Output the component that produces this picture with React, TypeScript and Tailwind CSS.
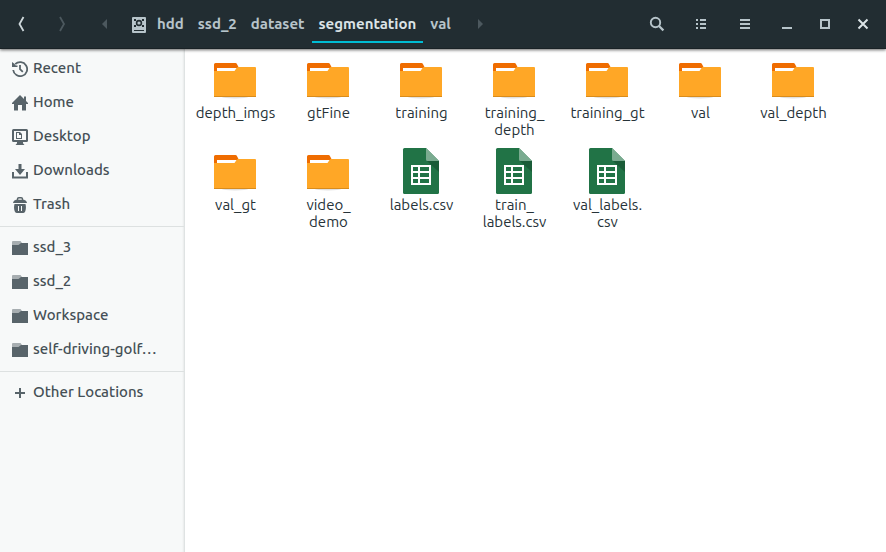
import type { ReactNode } from "react";

function Glyph({ children, className = "" }: { children: ReactNode; className?: string }) {
  return (
    <svg className={`size-4 shrink-0 ${className}`} viewBox="0 0 16 16" fill="currentColor" aria-hidden="true">
      {children}
    </svg>
  );
}

function RecentIcon() {
  return (
    <Glyph>
      <path d="M3.200 3.200A7 7 0 1 1 1.200 9" fill="none" stroke="currentColor" strokeWidth="1.800" />
      <path d="M0 1v5h5.500V4.500H3.800L2 2.500z" />
      <path d="M8 4v4.200l2.800 2.600" fill="none" stroke="currentColor" strokeWidth="1.800" />
    </Glyph>
  );
}

function HomeIcon() {
  return (
    <Glyph>
      <path d="M8 0 0 8v1h2v6.500h4V10h4v5.500h4V9h2V8l-2-2V1.500h-2V4z" />
    </Glyph>
  );
}

function DesktopIcon() {
  return (
    <Glyph>
      <path fillRule="evenodd" d="M1.500 0h13A1.500 1.500 0 0 1 16 1.500v9.900a1.500 1.500 0 0 1-1.500 1.600h-13A1.500 1.500 0 0 1 0 11.400V1.500A1.500 1.500 0 0 1 1.500 0zM2 2v9h12V2z" />
      <path fillRule="evenodd" d="M4 3h4l2 2v5H4zM5 4v5h4V6H7V4z" />
      <path d="M5 13h6v1.300l1.500 1.700h-9L5 14.300z" />
    </Glyph>
  );
}

function DownloadIcon() {
  return (
    <Glyph>
      <path d="M6.500 1h3v5H13l-5 6-5-6h3.500z" />
      <path d="M0 9h2v4.500h12V9h2v6.500H0z" />
    </Glyph>
  );
}

function TrashIcon() {
  return (
    <Glyph>
      <path d="M5.500 3V2a1.300 1.300 0 0 1 1.300-1.200h2.400A1.300 1.300 0 0 1 10.500 2v1" fill="none" stroke="currentColor" strokeWidth="1.500" />
      <path d="M4 2.800h8c1.500.400 2.600 1.400 3 3.200H1c.400-1.800 1.500-2.800 3-3.200z" />
      <path fillRule="evenodd" d="M2.500 7h11c.700 2.500.600 5-.300 7.500a2 2 0 0 1-1.900 1.500H4.700a2 2 0 0 1-1.900-1.500C1.900 12 1.800 9.500 2.500 7zM6 9v5h1V9zM9 9v5h1V9z" />
    </Glyph>
  );
}

function SmallFolderIcon() {
  return (
    <Glyph>
      <path d="M0 2a1 1 0 0 1 1-1h7.500L10 3v2H0z" opacity=".5" />
      <path d="M0 5h6.500L9 3h7v12H0z" />
    </Glyph>
  );
}

function PlusIcon() {
  return (
    <Glyph>
      <path d="M7 3h2v4h4v2H9v4H7V9H3V7h4z" />
    </Glyph>
  );
}

function DriveIcon() {
  return (
    <Glyph>
      <path d="M2 0h12a1 1 0 0 1 1 1v14a1 1 0 0 1-1 1H2a1 1 0 0 1-1-1V1a1 1 0 0 1 1-1z" />
      <circle cx="8" cy="6" r="2.400" fill="none" stroke="#222d32" strokeWidth="1.600" />
      <path d="M3 2h2v2H3zM11 2h2v2h-2zM3 8h2v2H3zM11 8h2v2h-2zM3 13h10v1H3z" fill="#222d32" />
    </Glyph>
  );
}

function FolderIcon() {
  return (
    <svg className="size-12" viewBox="0 0 48 48" aria-hidden="true">
      <ellipse cx="24" cy="42" rx="13" ry="1.500" fill="#000" opacity=".12" />
      <path d="M3 9.500A1.500 1.500 0 0 1 4.500 8h20a1.500 1.500 0 0 1 1.300.800L28 13v8H3z" fill="#ef6c00" />
      <path d="M6 13h20v6H6z" fill="#fff" />
      <path d="M3 16h20.500l2.200-3.200a2 2 0 0 1 1.600-.800H44a1 1 0 0 1 1 1v29H3z" fill="#ffa726" />
      <path d="M3 41h42v1H3z" fill="#d98c1c" />
    </svg>
  );
}

function SheetIcon() {
  return (
    <svg className="size-12" viewBox="0 0 48 48" aria-hidden="true">
      <path d="M7.500 1H29l13 13v31.500a1.500 1.500 0 0 1-1.500 1.500h-33A1.500 1.500 0 0 1 6 45.500v-43A1.500 1.500 0 0 1 7.500 1z" fill="#217346" />
      <path d="m30 14 12 11V14z" fill="#1a5c38" />
      <path d="M29 1v11.500a1.500 1.500 0 0 0 1.500 1.500H42z" fill="#7aab90" />
      <path fillRule="evenodd" d="M14 18h20v20H14zM16 20v4h5v-4zM23 20v4h9v-4zM16 26v4h5v-4zM23 26v4h9v-4zM16 32v4h5v-4zM23 32v4h9v-4z" fill="#fff" />
    </svg>
  );
}

type Place = { name: string; icon: () => ReactNode };

const placeGroups: Place[][] = [
  [
    { name: "Recent", icon: RecentIcon },
    { name: "Home", icon: HomeIcon },
    { name: "Desktop", icon: DesktopIcon },
    { name: "Downloads", icon: DownloadIcon },
    { name: "Trash", icon: TrashIcon },
  ],
  [
    { name: "ssd_3", icon: SmallFolderIcon },
    { name: "ssd_2", icon: SmallFolderIcon },
    { name: "Workspace", icon: SmallFolderIcon },
    { name: "self-driving-golf…", icon: SmallFolderIcon },
  ],
  [{ name: "Other Locations", icon: PlusIcon }],
];

const files: { lines: string[]; sheet?: boolean }[] = [
  { lines: ["depth_imgs"] },
  { lines: ["gtFine"] },
  { lines: ["training"] },
  { lines: ["training_", "depth"] },
  { lines: ["training_gt"] },
  { lines: ["val"] },
  { lines: ["val_depth"] },
  { lines: ["val_gt"] },
  { lines: ["video_", "demo"] },
  { lines: ["labels.csv"], sheet: true },
  { lines: ["train_", "labels.csv"], sheet: true },
  { lines: ["val_labels.", "csv"], sheet: true },
];

const crumbs = ["hdd", "ssd_2", "dataset", "segmentation", "val"];

function IconButton({ label, className, children }: { label: string; className: string; children: ReactNode }) {
  return (
    <button type="button" aria-label={label} className={`flex h-full shrink-0 items-center justify-center ${className}`}>
      <Glyph>{children}</Glyph>
    </button>
  );
}

function HeaderBar() {
  return (
    <header className="relative z-10 flex h-[49px] items-stretch border-b border-[#1a2226] bg-[#222d32] px-0.5 text-[#b7c4ca] shadow-[0_1px_3px_rgba(0,0,0,0.6)]">
      <IconButton label="Back" className="w-10 text-[#cfd8dc]">
        <path d="M9.500 1 5.500 8l4 7" fill="none" stroke="currentColor" strokeWidth="1.800" />
      </IconButton>
      <IconButton label="Forward" className="w-10 text-[#4c585e]">
        <path d="m6 1 4 7-4 7" fill="none" stroke="currentColor" strokeWidth="1.800" />
      </IconButton>
      <nav aria-label="Path" className="flex min-w-0 flex-1 items-stretch">
        <IconButton label="Scroll path left" className="w-[42px] text-[#4c585e]">
          <path d="M12 3v10L7 8z" />
        </IconButton>
        {crumbs.map((name) => (
          <button
            key={name}
            type="button"
            className={`mb-[5px] flex items-center gap-2.5 border-b-2 px-[7px] pt-2 text-[15px] font-bold ${
              name === "segmentation" ? "border-[#00bcd4] text-[#dbe3e6]" : "border-transparent"
            }`}
          >
            {name === "hdd" && <DriveIcon />}
            {name}
          </button>
        ))}
        <IconButton label="Scroll path right" className="w-11 text-[#4c585e]">
          <path d="M6 3v10l5-5z" />
        </IconButton>
      </nav>
      <IconButton label="Search" className="w-11">
        <circle cx="6.500" cy="6.500" r="4.700" fill="none" stroke="currentColor" strokeWidth="1.900" />
        <path d="m10 10 4.400 4.400" stroke="currentColor" strokeWidth="2.200" />
      </IconButton>
      <IconButton label="List view" className="w-11">
        <path d="M3 3h2v2H3zM7 3h6v2H7zM3 7h2v2H3zM7 7h6v2H7zM3 11h2v2H3zM7 11h6v2H7z" />
      </IconButton>
      <IconButton label="Menu" className="w-11">
        <path d="M3 3h10v2H3zM3 7h10v2H3zM3 11h10v2H3z" />
      </IconButton>
      <div className="flex pr-0.5 pl-px">
        <IconButton label="Minimize" className="w-[38px]">
          <path d="M3 11h10v2H3z" />
        </IconButton>
        <IconButton label="Maximize" className="w-[38px]">
          <path d="M4 4h8v8H4z" fill="none" stroke="currentColor" strokeWidth="2" />
        </IconButton>
        <IconButton label="Close" className="w-[38px] text-[#dbe3e6]">
          <path d="m3.500 3.500 9 9m0-9-9 9" stroke="currentColor" strokeWidth="2" />
        </IconButton>
      </div>
    </header>
  );
}

export default function App() {
  return (
    <div className="flex min-h-screen flex-col bg-white font-['Ubuntu','Noto_Sans',sans-serif]">
      <HeaderBar />
      <div className="flex flex-1">
        <aside className="w-[185px] shrink-0 border-r border-[#dfe3e3] bg-[#f7f9f9] pt-[3px] text-[15px] font-medium text-[#455056] shadow-[inset_-2px_0_2px_-1px_rgba(0,0,0,0.06)]">
          {placeGroups.map((group, index) => (
            <ul key={group[0].name} className={index > 0 ? "mt-1 border-t border-[#dde1e1] pt-1" : ""}>
              {group.map(({ name, icon: Icon }) => (
                <li key={name}>
                  <button type="button" className="flex h-[34px] w-full items-center gap-[5px] px-3 text-left whitespace-nowrap">
                    <span className="text-[#58646a]">
                      <Icon />
                    </span>
                    <span className="pb-0.5">{name}</span>
                  </button>
                </li>
              ))}
            </ul>
          ))}
        </aside>
        <main className="min-w-0 flex-1 pt-1.5 pl-[3px]">
          <ul className="grid grid-cols-[repeat(auto-fill,93px)] gap-y-[9px]">
            {files.map(({ lines, sheet }) => (
              <li key={lines.join("")}>
                <button type="button" className="flex w-full flex-col items-center gap-px text-[15px] leading-[17px] text-[#263238]">
                  {sheet ? <SheetIcon /> : <FolderIcon />}
                  <span className="pl-0.5">
                    {lines.map((line) => (
                      <span key={line} className="block">
                        {line}
                      </span>
                    ))}
                  </span>
                </button>
              </li>
            ))}
          </ul>
        </main>
      </div>
    </div>
  );
}
